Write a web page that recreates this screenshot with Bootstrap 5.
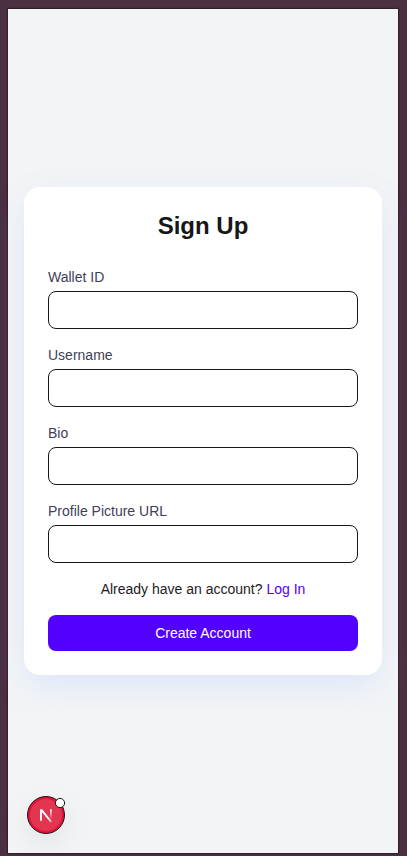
<!DOCTYPE html>
<html lang="en">
<head>
<meta charset="utf-8">
<meta name="viewport" content="width=device-width, initial-scale=1">
<title>Sign Up</title>
<link rel="stylesheet" href="https://cdn.jsdelivr.net/npm/bootstrap@5.3.0/dist/css/bootstrap.min.css">
<style>
body { background: #4b3042; font-family: "Liberation Sans", Arial, sans-serif; font-size: 14px; line-height: 20px; color: #1c1c1c; height: 856px; padding: 9px 9px 3px 8px; }
.screen { height: 844px; background: #f2f4f6; box-shadow: 0 0 1px 1px rgba(20, 8, 18, .4); }
.signup { border-radius: 16px; box-shadow: 0 2px 40px rgba(140, 150, 240, .035), 0 14px 28px -5px rgba(205, 224, 255, .55); }
.signup h1 { font-size: 24px; line-height: 32px; margin-top: -1px; color: #171717; }
.signup label { color: #3f4058; margin-bottom: 4px; }
.signup .form-control { height: 38px; border: 1px solid #171717; border-radius: 8px; }
.signup a, .signup a:hover { color: #5200ff; }
.signup .btn { --bs-btn-color: #fff; --bs-btn-bg: #5200ff; --bs-btn-hover-bg: #4600dc; --bs-btn-hover-color: #fff; height: 36px; font-size: 14px; line-height: 20px; border-radius: 8px; border: 0; }
.dev-tool { left: 19px; bottom: 19px; width: 38px; height: 38px; filter: drop-shadow(0 10px 14px rgba(0, 0, 0, .07)); }
.heading-gap { margin-bottom: 9px; }
</style>
<script src="https://cdn.jsdelivr.net/npm/bootstrap@5.3.0/dist/js/bootstrap.bundle.min.js" defer></script>
</head>
<body class="overflow-hidden">
<main class="screen position-relative d-flex align-items-center px-3">
  <form class="signup bg-white w-100 p-4 d-flex flex-column gap-3">
    <h1 class="heading-gap text-center fw-bold">Sign Up</h1>
    <div><label class="d-block" for="wallet">Wallet ID</label><input class="form-control" id="wallet"></div>
    <div><label class="d-block" for="username">Username</label><input class="form-control" id="username"></div>
    <div><label class="d-block" for="bio">Bio</label><input class="form-control" id="bio"></div>
    <div><label class="d-block" for="picture">Profile Picture URL</label><input class="form-control" id="picture"></div>
    <div class="text-center">Already have an account? <a class="text-decoration-none" href="#">Log In</a></div>
    <button class="btn w-100 py-2" type="button">Create Account</button>
  </form>
  <svg class="dev-tool position-absolute overflow-visible" viewBox="0 0 38 38" fill="none" aria-hidden="true">
    <defs>
      <linearGradient id="diagonal" x1="19" y1="19" x2="25" y2="27" gradientUnits="userSpaceOnUse"><stop offset=".4" stop-color="#fff"/><stop offset="1" stop-color="#fff" stop-opacity=".35"/></linearGradient>
      <linearGradient id="stem" x1="24" y1="13" x2="24" y2="23" gradientUnits="userSpaceOnUse"><stop stop-color="#fff"/><stop offset="1" stop-color="#fff" stop-opacity="0"/></linearGradient>
    </defs>
    <circle cx="19" cy="19" r="18.5" fill="#e3113c" stroke="#171717"/>
    <circle cx="19" cy="19" r="16" fill="#e23550"/>
    <path d="M13 13.2h2.2L25 25.4l-1.5 1.2L14.9 15.9V24.8H13z" fill="url(#diagonal)"/>
    <path d="M23.9 13.2V23" stroke="url(#stem)" stroke-width="1.8"/>
    <circle cx="33" cy="7" r="4.6" fill="#fff" stroke="#171717"/>
  </svg>
</main>
</body>
</html>
